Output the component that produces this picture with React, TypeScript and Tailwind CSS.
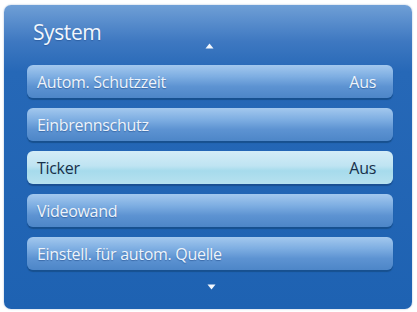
import React from 'react';

const items = [
  { label: 'Autom. Schutzzeit', value: 'Aus' },
  { label: 'Einbrennschutz' },
  { label: 'Ticker', value: 'Aus', active: true },
  { label: 'Videowand' },
  { label: 'Einstell. für autom. Quelle' },
];

function Row({ label, value, active }: { label: string; value?: string; active?: boolean }) {
  return (
    <div
      className={
        active
          ? 'flex h-[33px] items-center justify-between rounded-[6px] pl-[10px] pr-[17px] text-[#18304a] bg-[linear-gradient(180deg,#d3ecf7_0%,#bfe4f2_45%,#a6dbec_60%,#b7e1ef_100%)] shadow-[0_2px_1px_#1a4f92]'
          : 'flex h-[33px] items-center justify-between rounded-[6px] pl-[10px] pr-[17px] text-[#eef4fb] [text-shadow:0_1px_1px_rgba(20,60,120,0.45)] bg-[linear-gradient(180deg,#a3c8ee_0%,#7eaee2_35%,#5d93d2_65%,#4d86c8_100%)] shadow-[0_2px_1px_#17508f]'
      }
    >
      <span className="text-[16px] tracking-[-0.3px]">{label}</span>
      {value && <span className="text-[16px] tracking-[-0.3px]">{value}</span>}
    </div>
  );
}

export default function App() {
  return (
    <div className="h-[312px] w-[417px] bg-white p-[5px_5px_3px_4px] font-['Open_Sans',sans-serif]">
      <div className="flex h-full flex-col rounded-[7px] bg-[linear-gradient(180deg,#6f9fd6_0%,#3e78c1_12%,#2668b7_22%,#1e62b2_100%)] pl-[23px] pr-[19px] shadow-[0_0_2px_#9bb6d6]">
        <div className="relative h-[60px]">
          <span className="absolute left-[6px] top-[17px] text-[21px] leading-none tracking-[-0.4px] text-[#f2f7fd] [text-shadow:0_1px_1px_rgba(20,60,120,0.4)]">System</span>
          <svg className="absolute left-[178px] top-[38px]" width="9" height="6" viewBox="0 0 9 6">
            <path d="M4.5 0.5 L8.5 5.5 L0.5 5.5 Z" fill="#f4f8fd" />
          </svg>
        </div>
        <div className="flex flex-col gap-[10px]">
          {items.map((it) => (
            <Row key={it.label} {...it} />
          ))}
        </div>
        <div className="flex flex-1 items-center justify-center pb-[6px] pl-[2px]">
          <svg width="9" height="6" viewBox="0 0 9 6">
            <path d="M0.5 0.5 L8.5 0.5 L4.5 5.5 Z" fill="#f4f8fd" />
          </svg>
        </div>
      </div>
    </div>
  );
}
